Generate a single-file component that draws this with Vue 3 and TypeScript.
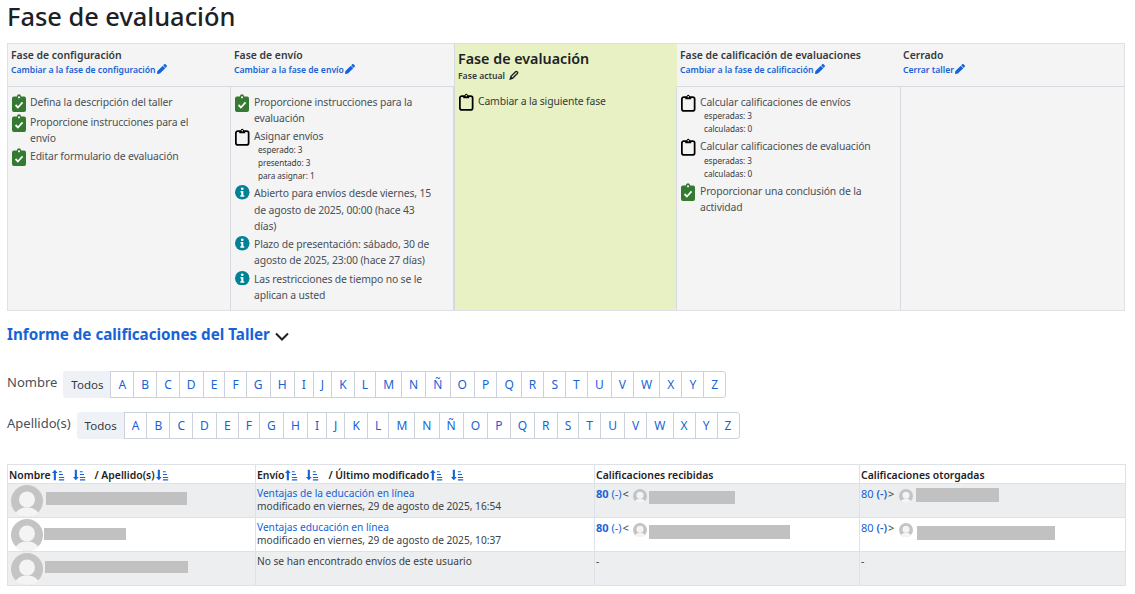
<script setup lang="ts">
interface Item { icon: 'done' | 'todo' | 'info'; text: string; subs?: string[] }
interface Phase { title: string; link?: string; active?: boolean; items: Item[] }

const phases: Phase[] = [
  { title: 'Fase de configuración', link: 'Cambiar a la fase de configuración', items: [
    { icon: 'done', text: 'Defina la descripción del taller' },
    { icon: 'done', text: 'Proporcione instrucciones para el envío' },
    { icon: 'done', text: 'Editar formulario de evaluación' },
  ] },
  { title: 'Fase de envío', link: 'Cambiar a la fase de envío', items: [
    { icon: 'done', text: 'Proporcione instrucciones para la evaluación' },
    { icon: 'todo', text: 'Asignar envíos', subs: ['esperado: 3', 'presentado: 3', 'para asignar: 1'] },
    { icon: 'info', text: 'Abierto para envíos desde viernes, 15 de agosto de 2025, 00:00 (hace 43 días)' },
    { icon: 'info', text: 'Plazo de presentación: sábado, 30 de agosto de 2025, 23:00 (hace 27 días)' },
    { icon: 'info', text: 'Las restricciones de tiempo no se le aplican a usted' },
  ] },
  { title: 'Fase de evaluación', active: true, items: [
    { icon: 'todo', text: 'Cambiar a la siguiente fase' },
  ] },
  { title: 'Fase de calificación de evaluaciones', link: 'Cambiar a la fase de calificación', items: [
    { icon: 'todo', text: 'Calcular calificaciones de envíos', subs: ['esperadas: 3', 'calculadas: 0'] },
    { icon: 'todo', text: 'Calcular calificaciones de evaluación', subs: ['esperadas: 3', 'calculadas: 0'] },
    { icon: 'done', text: 'Proporcionar una conclusión de la actividad' },
  ] },
  { title: 'Cerrado', link: 'Cerrar taller', items: [] },
];

const letters = 'A B C D E F G H I J K L M N Ñ O P Q R S T U V W X Y Z'.split(' ');
const bars: { label: string; cls: string }[] = [
  { label: 'Nombre', cls: 'first' },
  { label: 'Apellido(s)', cls: 'last' },
];

interface Row {
  striped: boolean; blur: string; title?: string; modified?: string;
  inBlur?: string; outBlur?: string;
}
const rows: Row[] = [
  { striped: true, blur: 'n1', title: 'Ventajas de la educación en línea', modified: 'modificado en viernes, 29 de agosto de 2025, 16:54', inBlur: 'r1', outBlur: 'g1' },
  { striped: false, blur: 'n2', title: 'Ventajas educación en línea', modified: 'modificado en viernes, 29 de agosto de 2025, 10:37', inBlur: 'r2', outBlur: 'g2' },
  { striped: true, blur: 'n3' },
];
</script>

<template>
  <div class="page">
    <svg class="defs" width="0" height="0" aria-hidden="true">
      <defs>
        <symbol id="pen" viewBox="0 0 512 512">
          <path d="M497.9 142.1l-46.1 46.1c-4.7 4.7-12.3 4.7-17 0l-111-111c-4.7-4.7-4.7-12.3 0-17l46.1-46.1c18.7-18.7 49.1-18.7 67.9 0l60.1 60.1c18.8 18.7 18.8 49.1 0 67.9zM284.2 99.8L21.6 362.4.4 483.9c-2.9 16.4 11.4 30.6 27.8 27.8l121.5-21.3 262.6-262.6c4.7-4.7 4.7-12.3 0-17l-111-111c-4.8-4.7-12.4-4.7-17.1 0z" />
        </symbol>
        <symbol id="sort-up" viewBox="0 0 16 14">
          <path d="M3.500 .5 7 4.600H4.800V13.500H2.200V4.600H0z" fill="#1763d6" />
          <path d="M8.500 3h3.500M8.500 6.500h5M8.500 10h6.500M8.500 13h6.500" stroke="#1763d6" stroke-width="1.300" fill="none" />
        </symbol>
        <symbol id="sort-down" viewBox="0 0 16 14">
          <path d="M3.500 13.500 0 9.400h2.200V.5h2.600v8.900H7z" fill="#1763d6" />
          <path d="M8.500 3h3.500M8.500 6.500h5M8.500 10h6.500M8.500 13h6.500" stroke="#1763d6" stroke-width="1.300" fill="none" />
        </symbol>
        <symbol id="avatar" viewBox="0 0 32 32">
          <circle cx="16" cy="16" r="16" fill="#c4c4c4" />
          <circle cx="16" cy="14.500" r="8" fill="#f4f4f4" />
          <path d="M4.500 28C8 23.500 11.500 22.500 16 22.500s8 1 11.500 5.500C24.500 30.600 20.500 32 16 32S7.500 30.600 4.500 28z" fill="#f4f4f4" />
        </symbol>
      </defs>
    </svg>

    <h1 class="title">Fase de evaluación</h1>

    <section class="phases">
      <div v-for="p in phases" :key="p.title" class="phase" :class="{ active: p.active }">
        <header class="phase-head">
          <h3 v-if="!p.active" class="phase-title">{{ p.title }}</h3>
          <h2 v-else class="phase-title-big">{{ p.title }}</h2>
          <a v-if="p.link" class="phase-link">{{ p.link }}<svg class="pen"><use href="#pen" /></svg></a>
          <span v-else class="phase-current">Fase actual
            <svg class="pen-black" viewBox="0 0 16 16"><path d="M2 14.500 3.200 10 10.500 2.700a1.600 1.600 0 0 1 2.300 0l.6.600a1.600 1.600 0 0 1 0 2.300L6 12.900z" fill="none" stroke="#1d2125" stroke-width="2.200" /><path d="M2 14.500 3.200 10 6 12.900z" fill="#1d2125" /></svg>
          </span>
        </header>
        <ul class="tasks">
          <li v-for="it in p.items" :key="it.text" class="task" :class="[it.icon, { 'has-subs': it.subs }]">
            <span class="ico">
              <svg v-if="it.icon === 'done'" width="14" height="18" viewBox="0 0 15 18" preserveAspectRatio="none">
                <path d="M2 2.500h3.200C5.500 1 6.400.3 7.500.3S9.500 1 9.800 2.500H13a2 2 0 0 1 2 2V16a2 2 0 0 1-2 2H2a2 2 0 0 1-2-2V4.500a2 2 0 0 1 2-2z" fill="#357a32" />
                <circle cx="7.500" cy="3.300" r="1.100" fill="#fff" />
                <path d="M3.800 11 6.300 13.500 11.300 8.300" fill="none" stroke="#fff" stroke-width="1.800" />
              </svg>
              <svg v-else-if="it.icon === 'todo'" width="14.500" height="18" viewBox="0 0 15 18">
                <rect x=".9" y="2.900" width="13.200" height="14.200" rx="2" fill="none" stroke="#000" stroke-width="1.800" />
                <path d="M4.400 3.200h1.300C5.800 1.500 6.500.4 7.500.4s1.700 1.100 1.800 2.800h1.300v2H4.400z" fill="#000" />
                <circle cx="7.500" cy="2.500" r=".8" fill="#fff" />
              </svg>
              <svg v-else width="14.500" height="14.500" viewBox="0 0 15 15">
                <circle cx="7.500" cy="7.500" r="7.500" fill="#008196" />
                <circle cx="7.500" cy="3.900" r="1.400" fill="#fff" />
                <path d="M5.700 6.200h2.900v4.400h1v1.500H5.500v-1.500h1V7.700h-.8z" fill="#fff" />
              </svg>
            </span>
            <div class="task-body">
              <div class="task-text">{{ it.text }}</div>
              <div v-for="s in it.subs" :key="s" class="task-sub">{{ s }}</div>
            </div>
          </li>
        </ul>
      </div>
    </section>

    <h2 class="report-title">
      <a>Informe de calificaciones del Taller</a>
      <svg class="chev" width="14" height="9" viewBox="0 0 14 9"><path d="M1 1.500 7 7.500 13 1.500" fill="none" stroke="#1d2125" stroke-width="2" /></svg>
    </h2>

    <div v-for="b in bars" :key="b.label" class="initials" :class="b.cls">
      <span class="init-label">{{ b.label }}</span>
      <div class="pager">
        <span class="pg pg-all">Todos</span>
        <a v-for="l in letters" :key="l" class="pg">{{ l }}</a>
      </div>
    </div>

    <table class="grades">
      <colgroup>
        <col class="c1" /><col class="c2" /><col class="c3" /><col class="c4" />
      </colgroup>
      <thead>
        <tr>
          <th>Nombre<svg class="s1"><use href="#sort-up" /></svg><svg class="s2"><use href="#sort-down" /></svg><span class="slash">/ Apellido(s)</span><svg class="s1"><use href="#sort-down" /></svg></th>
          <th>Envío<svg class="s1"><use href="#sort-up" /></svg><svg class="s2"><use href="#sort-down" /></svg><span class="slash">/ Último modificado</span><svg class="s1"><use href="#sort-up" /></svg><svg class="s2"><use href="#sort-down" /></svg></th>
          <th>Calificaciones recibidas</th>
          <th>Calificaciones otorgadas</th>
        </tr>
      </thead>
      <tbody>
        <tr v-for="(r, i) in rows" :key="i" :class="{ striped: r.striped }">
          <td class="name-cell">
            <div class="name-wrap">
              <svg class="av"><use href="#avatar" /></svg>
              <span class="blur" :class="r.blur"></span>
            </div>
          </td>
          <td>
            <template v-if="r.title">
              <a class="sub-link">{{ r.title }}</a><br />
              {{ r.modified }}
            </template>
            <template v-else>No se han encontrado envíos de este usuario</template>
          </td>
          <td>
            <div v-if="r.inBlur" class="grade">
              <a class="g-strong">80</a>&nbsp;<a class="g-light">(-)</a><span class="gt">&lt;</span>
              <svg class="av-s"><use href="#avatar" /></svg>
              <span class="blur" :class="r.inBlur"></span>
            </div>
            <template v-else>-</template>
          </td>
          <td>
            <div v-if="r.outBlur" class="grade out">
              <a class="g-light">80</a>&nbsp;<a class="g-strong2">(-)</a><span class="gt">&gt;</span>
              <svg class="av-s"><use href="#avatar" /></svg>
              <span class="blur" :class="r.outBlur"></span>
            </div>
            <template v-else>-</template>
          </td>
        </tr>
      </tbody>
    </table>
  </div>
</template>

<style>
html, body { margin: 0; background: #fff; }
</style>

<style scoped>
.page {
  width: 1135px; height: 594px; overflow: hidden; box-sizing: border-box;
  padding: 0 10px 0 7px;
  font-family: "Noto Sans", "Open Sans", sans-serif;
  font-size: 10.4px; line-height: 16.25px; color: #3d4145;
}
.defs { position: absolute; }
a { color: #1763d6; text-decoration: none; }
.title { margin: 0; height: 43px; font-size: 25.4px; line-height: 33px; font-weight: 500; color: #1d2125; }

.phases {
  display: grid; grid-template-columns: 223px 223px 223px 224px 223px;
  height: 268px; box-sizing: border-box;
  border: 1px solid #dee2e6; background: #f4f4f4;
}
.phase { display: flex; flex-direction: column; min-width: 0; }
.phase-head { height: 43px; box-sizing: border-box; padding: 3px 3px 0; border-bottom: 1px solid #d6dae0; }
.phase:last-child .phase-head { padding-left: 2px; }
.phase-title { margin: 0; font-size: 10.4px; line-height: 16px; font-weight: 600; color: #343a40; white-space: nowrap; }
.phase-link { display: block; font-size: 8.6px; line-height: 14px; font-weight: 600; white-space: nowrap; }
.pen { width: 10px; height: 10px; fill: #1763d6; vertical-align: -1px; margin-left: 1px; }
.tasks { list-style: none; margin: 0; padding: 7px 14px 0 4px; flex: 1; border-right: 1px solid #d6dae0; }
.phase:last-child .tasks { border-right: 0; }
.phase:first-child .task { gap: 3px; }
.task { display: flex; gap: 4px; margin-bottom: 1.5px; min-height: 18.5px; letter-spacing: -.15px; }
.task.info { margin-bottom: 2px; }
.task.has-subs { margin-bottom: 3px; }
.ico { width: 15px; flex: none; display: block; line-height: 0; }
.task-text { color: #495057; }
.task-sub { font-size: 8.2px; line-height: 13px; padding-left: 4px; color: #343a40; letter-spacing: -.05px; }
.task-text + .task-sub { margin-top: -1px; }

.phase.active { background: #e7f1c3; border-left: 1px solid #d6dae0; }
.active .phase-head { border-bottom: 0; height: 43px; padding-top: 5px; }
.phase-title-big { margin: 0; font-size: 14.3px; line-height: 20px; font-weight: 600; color: #1d2125; }
.phase-current { display: block; font-size: 8.6px; line-height: 14px; font-weight: 600; color: #343a40; }
.pen-black { width: 10px; height: 10px; vertical-align: -1px; margin-left: 2px; }
.active .tasks { border-right: 1px solid #d6dae0; padding-top: 6px; }
.active .task-text { color: #343a40; }

.report-title { margin: 10px 0 0; height: 26px; font-size: 15.2px; line-height: 24px; font-weight: 700; display: flex; align-items: center; gap: 5px; }
.chev { margin-top: 5px; }

.initials { display: flex; align-items: center; gap: 6px; height: 27px; }
.initials.first { margin-top: 24px; }
.initials.last { margin-top: 14px; }
.init-label { font-size: 13px; color: #495057; margin-top: -5px; }
.pager { display: flex; }
.pg {
  display: block; height: 27px; box-sizing: border-box; padding: 0 7.05px; line-height: 26px;
  font-size: 12px; border: 1px solid #ccd1de; margin-left: -1px; background: #fff;
}
.pg-all { font-size: 11.5px; margin-left: 0; border: 0; background: #eef1f6; border-radius: 3px 0 0 3px; padding: 0 8px; color: #343a40; line-height: 27px; }
.pg:last-child { border-radius: 0 3px 3px 0; }

.grades { margin-top: 25px; width: 1118px; border-collapse: collapse; table-layout: fixed; border: 1px solid #dee2e6; }
.c1 { width: 248px; } .c2 { width: 339px; } .c3 { width: 265px; } .c4 { width: 266px; }
th { height: 19px; box-sizing: border-box; padding: 1px 0 0 1px; text-align: left; font-size: 10.4px; line-height: 16px; font-weight: 600; color: #1d2125; border: 1px solid #dee2e6; white-space: nowrap; }
td { height: 34px; box-sizing: border-box; padding: 2.5px 0 0 1px; vertical-align: top; border: 1px solid #dee2e6; font-size: 10.2px; line-height: 13.5px; letter-spacing: -.02px; color: #3d4145; }
.striped td { background: #eceef0; }
.s1, .s2 { width: 13px; height: 12px; vertical-align: -2px; }
.s1 { margin-left: 1px; }
.s2 { margin-left: 8px; }
.slash { margin-left: 9px; }
td.name-cell { padding: 1px 0 0 2px; }
.name-wrap { display: flex; align-items: center; height: 32px; margin-left: 1px; }
.av { width: 32px; height: 32px; flex: none; }
.blur { display: inline-block; background: #c1c1c1; flex: none; }
.n1 { width: 141px; height: 13px; margin: 0 0 6px 3px; }
.n2 { width: 82px; height: 12px; margin: 0 0 2px 1px; }
.n3 { width: 143px; height: 12px; margin: 0 0 4px 2px; }
.grade { display: flex; align-items: flex-start; font-size: 11px; }
.g-strong { font-weight: 700; }
.g-strong2 { font-weight: 600; }
.g-light { font-weight: 400; }
.gt { margin-left: 1px; }
.av-s { width: 14px; height: 14px; margin: 2px 2px 0 4px; flex: none; }
.grade.out .av-s { margin-left: 5px; }
.r1 { width: 86px; height: 13px; margin-top: 4px; }
.r2 { width: 141px; height: 14px; margin-top: 4px; }
.g1 { width: 83px; height: 14px; margin: 1px 0 0 1px; }
.g2 { width: 138px; height: 14px; margin: 5px 0 0 2px; }
</style>
